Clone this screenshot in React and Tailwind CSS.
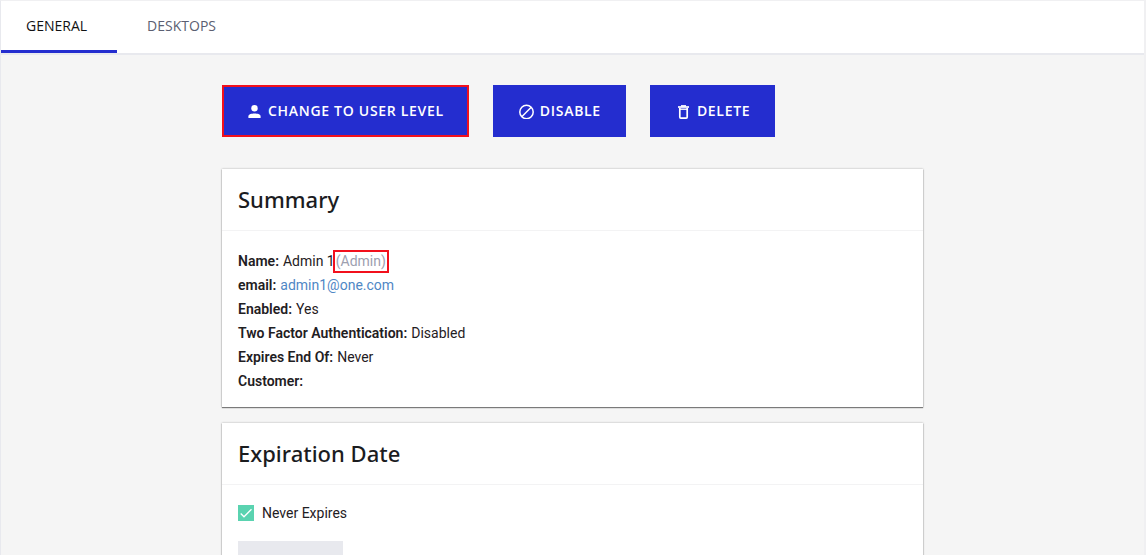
import { useState } from "react";

const tabs = ["General", "Desktops"];

function ActionButton({ icon, children, className = "" }) {
  return (
    <button
      type="button"
      className={`flex h-[52px] items-center gap-[5px] bg-[#242dcf] font-['Open_Sans',sans-serif] text-sm font-semibold tracking-wider text-white uppercase ${className}`}
    >
      {icon}
      {children}
    </button>
  );
}

function Card({ title, children }) {
  return (
    <section className="bg-white shadow-[0_1px_1px_rgba(0,0,0,0.45),0_0_2px_rgba(0,0,0,0.3)]">
      <header className="flex h-[62px] items-center border-b border-[#f3f3f4] px-4 pb-0.5">
        <h2 className="font-['Noto_Sans',sans-serif] text-[22px] leading-8 font-medium text-[#1b1c1f]">
          {title}
        </h2>
      </header>
      {children}
    </section>
  );
}

function Row({ label, children }) {
  return (
    <div className="flex gap-1">
      <dt className="font-semibold">{label}:</dt>
      <dd className="flex items-start">{children}</dd>
    </div>
  );
}

const PersonIcon = () => (
  <svg aria-hidden="true" viewBox="0 0 16 16" className="size-4" fill="currentColor">
    <circle cx="7.500" cy="5.200" r="3.200" />
    <path d="M1.400 15v-1.600C1.400 11.300 4.600 10.600 7.500 10.600s6.100.7 6.100 2.800V15z" />
  </svg>
);

const BlockIcon = () => (
  <svg aria-hidden="true" viewBox="0 0 16 16" className="size-4" fill="none" stroke="currentColor" strokeWidth="1.500">
    <circle cx="7.500" cy="9" r="6.700" />
    <path d="M2.800 13.700 12.200 4.300" />
  </svg>
);

const TrashIcon = () => (
  <svg aria-hidden="true" viewBox="0 0 16 16" className="size-4" fill="none" stroke="currentColor" strokeWidth="1.700">
    <path d="M3.800 5v8.900q0 1.200 1 1.200h5.400q1 0 1-1.200V5" />
    <path d="M2 4h11" strokeWidth="1.700" />
    <path d="M3.800 6.200h7.400" strokeWidth="1.400" />
    <path d="M5 2.900h5" strokeWidth="1.600" />
  </svg>
);

export default function App() {
  const [active, setActive] = useState("General");
  const [never, setNever] = useState(true);

  return (
    <div className="h-screen overflow-hidden border-t border-r-2 border-l border-t-[#f0f0f2] border-r-[#f0f0f2] border-l-[#e8e9ee] bg-[#f5f5f5] font-[Roboto,sans-serif] text-sm text-[#1f2023]">
      <nav className="flex border-b-2 border-[#e8e9ee] bg-white">
        {tabs.map((tab) => (
          <button
            key={tab}
            type="button"
            onClick={() => setActive(tab)}
            className={`h-[52px] border-b-3 font-['Open_Sans',sans-serif] text-sm uppercase ${
              active === tab
                ? "border-[#242dcf] pr-[30px] pl-[25px] font-medium text-[#111214]"
                : "border-transparent px-[30px] text-[#5b5f72]"
            }`}
          >
            {tab}
          </button>
        ))}
      </nav>

      <main className="mx-auto max-w-[701px] pt-[30px]">
        <div className="flex gap-6">
          <ActionButton icon={<PersonIcon />} className="border-2 border-[#f2101c] px-[23px]">
            Change to user level
          </ActionButton>
          <ActionButton icon={<BlockIcon />} className="pr-[25px] pl-[26px]">Disable</ActionButton>
          <ActionButton icon={<TrashIcon />} className="pr-[25px] pl-[26px]">Delete</ActionButton>
        </div>

        <div className="mt-8 flex flex-col gap-4">
          <Card title="Summary">
            <dl className="px-4 pt-[18px] pb-[14px] leading-6">
              <Row label="Name">
                Admin 1
                <span className="-ml-0.5 mt-px border-2 border-[#f2101c] px-px leading-[19px] text-[#9da0b0]">(Admin)</span>
              </Row>
              <Row label="email">
                <a href="mailto:admin1@one.com" className="text-[#4f87c5]">admin1@one.com</a>
              </Row>
              <Row label="Enabled">Yes</Row>
              <Row label="Two Factor Authentication">Disabled</Row>
              <Row label="Expires End Of">Never</Row>
              <Row label="Customer" />
            </dl>
          </Card>

          <Card title="Expiration Date">
            <div className="px-4 pt-4 pb-6">
              <label className="flex h-6 items-center gap-2">
                <span className="grid size-4">
                  <input
                    type="checkbox"
                    checked={never}
                    onChange={(e) => setNever(e.target.checked)}
                    className="peer col-start-1 row-start-1 size-4 appearance-none border border-[#5ad3b0] checked:bg-[#5ad3b0]"
                  />
                  <svg
                    aria-hidden="true"
                    viewBox="0 0 16 16"
                    className="pointer-events-none invisible col-start-1 row-start-1 size-4 peer-checked:visible"
                    fill="none"
                    stroke="white"
                    strokeWidth="1.300"
                  >
                    <path d="M2.700 8.500 6 11.800 13.500 4.300" />
                  </svg>
                </span>
                Never Expires
              </label>
              <button type="button" disabled aria-label="Save" className="mt-4 block h-[52px] w-[105px] bg-[#e8e9ee]" />
            </div>
          </Card>
        </div>
      </main>
    </div>
  );
}
